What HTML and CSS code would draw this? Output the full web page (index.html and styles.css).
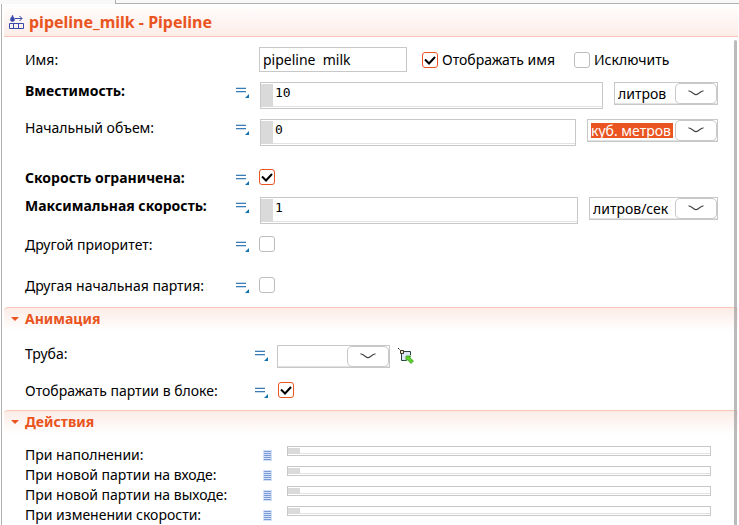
FILE: index.html
```html
<!DOCTYPE html>
<html lang="ru">
<head>
<meta charset="utf-8">
<title>pipeline_milk - Pipeline</title>
<link rel="stylesheet" href="styles.css">
</head>
<body>
<svg class="defs" aria-hidden="true">
  <symbol id="param" viewBox="0 0 13 12">
    <path d="M0 0H10V1H0ZM0 5H10V6H0Z" fill="#c9dcec"/>
    <path d="M0 1H10V2H0ZM0 4H10V5H0Z" fill="#3a7ab5"/>
    <path d="M13 7V11H9Z" fill="#1373b0"/>
  </symbol>
  <symbol id="lines" viewBox="0 0 9 11">
    <path d="M0 0H9V11H0Z" fill="#d3e0f8"/>
    <path d="M1 1H8M1 3H8M1 5H8M1 7H8M1 9H8" transform="translate(0 .5)" stroke="#7c9cd6"/>
  </symbol>
  <symbol id="arrow" viewBox="0 0 16 6">
    <path d="M.5 .7Q3 1.300 5.500 3.500Q8 5.800 10.500 3.500Q13 1.300 15.500 .7" fill="none" stroke="#444" stroke-width="1.1"/>
  </symbol>
</svg>
<div class="tabs"><span class="tab"></span><span class="tab-rest"></span></div>
<main class="panel">
  <header class="title">
    <svg class="title-icon" viewBox="0 0 15 14">
      <path d="M3.500 0Q4 2 5.300 3.300Q6.500 6.200 3.500 6.500Q.5 6.200 1.700 3.300Q3 2 3.500 0Z" fill="#3949ab" stroke="#3949ab" stroke-width=".5"/>
      <path d="M6 3.500H13M10.500 1L13 3.500L10.500 6" fill="none" stroke="#3949ab"/>
      <path d="M.5 8.500H14.500V13.500H.5ZM4.500 8.500V13.500M9.500 8.500V13.500" fill="none" stroke="#3949ab"/>
    </svg>
    <h1>pipeline_milk - Pipeline</h1>
  </header>
  <form class="body">
    <div class="group">
      <div class="row name-row">
        <label class="label" for="name">Имя:</label>
        <input class="name" id="name" type="text" value="pipeline  milk">
        <label class="option"><input class="check" type="checkbox" checked>Отображать имя</label>
        <label class="option"><input class="check" type="checkbox">Исключить</label>
      </div>
      <div class="row">
        <label class="label strong" for="capacity">Вместимость:</label>
        <svg class="param"><use href="#param"/></svg>
        <input class="code" id="capacity" type="text" value="10">
        <div class="combo short"><select aria-label="Единицы вместимости"><option>литров</option></select><span class="drop"><svg><use href="#arrow"/></svg></span></div>
      </div>
      <div class="row">
        <label class="label" for="initial">Начальный объем:</label>
        <svg class="param"><use href="#param"/></svg>
        <input class="code" id="initial" type="text" value="0">
        <div class="combo selected"><select aria-label="Единицы объема"><option>куб. метров</option></select><span class="drop"><svg><use href="#arrow"/></svg></span></div>
      </div>
      <div class="row spaced">
        <label class="label strong" for="limited">Скорость ограничена:</label>
        <svg class="param"><use href="#param"/></svg>
        <input class="check" id="limited" type="checkbox" checked>
      </div>
      <div class="row">
        <label class="label strong" for="speed">Максимальная скорость:</label>
        <svg class="param"><use href="#param"/></svg>
        <input class="code" id="speed" type="text" value="1">
        <div class="combo"><select aria-label="Единицы скорости"><option>литров/сек</option></select><span class="drop"><svg><use href="#arrow"/></svg></span></div>
      </div>
      <div class="row nudged">
        <label class="label" for="priority">Другой приоритет:</label>
        <svg class="param"><use href="#param"/></svg>
        <input class="check" id="priority" type="checkbox">
      </div>
      <div class="row spaced">
        <label class="label" for="batch">Другая начальная партия:</label>
        <svg class="param"><use href="#param"/></svg>
        <input class="check" id="batch" type="checkbox">
      </div>
    </div>

    <h2 class="section"><button type="button">Анимация</button></h2>
    <div class="group animation">
      <div class="row">
        <label class="label" for="pipe">Труба:</label>
        <svg class="param"><use href="#param"/></svg>
        <div class="combo pipe"><select id="pipe"><option></option></select><span class="drop"><svg><use href="#arrow"/></svg></span></div>
        <button class="pick" type="button" aria-label="Выбрать трубу">
          <svg viewBox="0 0 16 16">
            <path d="M4 4H13V13H4Z" fill="#dfe7f5"/>
            <path d="M0 0L3 3" stroke="#222" stroke-dasharray="1.500 .6"/>
            <path d="M5 3.500H12.500V7M3.500 5V12.500H8" fill="none" stroke="#2d3f47"/>
            <path d="M2.500 2.500H5.500V5.500H2.500Z" fill="#fbe2b0" stroke="#333"/>
            <path d="M8 8H13L11.700 9.500L15.500 13L13 15.500L9.700 11.700L8 13Z" fill="#5ed02a" stroke="#36931b" stroke-width=".7"/>
          </svg>
        </button>
      </div>
      <div class="row">
        <label class="label" for="show">Отображать партии в блоке:</label>
        <svg class="param"><use href="#param"/></svg>
        <input class="check" id="show" type="checkbox" checked>
      </div>
    </div>

    <h2 class="section"><button type="button">Действия</button></h2>
    <div class="group actions">
      <div class="row"><label class="label" for="a1">При наполнении:</label><svg class="lines"><use href="#lines"/></svg><input class="code" id="a1" type="text"></div>
      <div class="row"><label class="label" for="a2">При новой партии на входе:</label><svg class="lines"><use href="#lines"/></svg><input class="code" id="a2" type="text"></div>
      <div class="row"><label class="label" for="a3">При новой партии на выходе:</label><svg class="lines"><use href="#lines"/></svg><input class="code" id="a3" type="text"></div>
      <div class="row"><label class="label" for="a4">При изменении скорости:</label><svg class="lines"><use href="#lines"/></svg><input class="code" id="a4" type="text"></div>
    </div>
    <span class="scrollbar"></span>
  </form>
</main>
</body>
</html>
```

FILE: styles.css
```css
* { box-sizing: border-box; }

body {
  display: flex;
  flex-direction: column;
  height: 100vh;
  margin: 0;
  overflow: hidden;
  background: #fff;
  color: #000;
  font: 14px/18px "Noto Sans", sans-serif;
}

.defs { position: absolute; width: 0; height: 0; }

.tabs { display: flex; flex: none; height: 4px; background: #f8f8f8; }
.tab { width: 116px; border-right: 1px solid #b0b0b0; }
.tab-rest { flex: 1; border-bottom: 1px solid #b0b0b0; }

.panel {
  display: flex;
  flex: 1;
  flex-direction: column;
  min-height: 0;
  margin-left: 1px;
  border-left: 1px solid #b0b0b0;
}

.title {
  display: flex;
  flex: none;
  align-items: center;
  gap: 5px;
  height: 33px;
  margin: 0 1px 0 2px;
  padding: 3px 5px 0;
  border-bottom: 1px solid #f7c6b4;
  background: linear-gradient(#fff, #fcece7);
}
.title-icon { width: 15px; height: 14px; }

h1 { margin: 0; color: #e95420; font-size: 16px; line-height: 20px; }

.body { position: relative; flex: 1; min-height: 0; overflow: hidden; }

.group {
  display: flex;
  flex-direction: column;
  gap: 10px;
  padding: 10px 21px 12px 23px;
}

.row { display: flex; align-items: flex-start; }
.label { flex: none; width: 211px; white-space: nowrap; }
.strong { font-weight: 700; }
.spaced { margin-top: 13px; }
.nudged { margin-top: 2px; }

.name-row { align-items: center; }
.name-row .label { width: 234px; }
.name {
  width: 148px;
  height: 25px;
  margin-right: 15px;
  padding: 0 3px;
  border: 1px solid #c8c8c8;
  font: inherit;
}
.option { display: flex; align-items: center; gap: 4px; margin-right: 19px; white-space: nowrap; }

.param { flex: none; width: 13px; height: 12px; margin: 5px 11px 0 0; }
.param + .check { margin-left: -1px; }

.check {
  flex: none;
  width: 16px;
  height: 16px;
  margin: 0;
  appearance: none;
  border: 1px solid #bdbdbd;
  border-radius: 3px;
  background: #fff;
}
.check:checked {
  border-color: #e95420;
  background: url("data:image/svg+xml,%3Csvg xmlns='http://www.w3.org/2000/svg' viewBox='0 0 14 14'%3E%3Cpath d='M2 6.500L6 10.500L12 4' fill='none' stroke='%23000' stroke-width='2'/%3E%3C/svg%3E");
}

.code {
  flex: 1;
  min-width: 0;
  height: 27px;
  padding: 0 0 7px 14px;
  border: 1px solid #c8c8c8;
  background:
    linear-gradient(#dadada, #dadada) 0 1px / 12px calc(100% - 2px) no-repeat,
    linear-gradient(#e2e2e2, #e2e2e2) 0 calc(100% - 1px) / 100% 1px no-repeat,
    #fff;
  font: 13px "DejaVu Sans Mono", monospace;
}

.combo {
  position: relative;
  flex: none;
  width: 129px;
  height: 23px;
  margin-left: 11px;
  border: 1px solid #c8c8c8;
  box-shadow: inset 0 -1px #e2e2e2;
}
.combo.short { width: 104px; }
.combo.selected { width: 131px; }
.combo select {
  width: 100%;
  height: 21px;
  padding: 0 44px 0 3px;
  appearance: none;
  border: 0;
  background: none;
  color: #000;
  font: inherit;
}
.combo.selected select {
  background: linear-gradient(#e95420, #e95420) 3px 3px / calc(100% - 47px) 15px no-repeat;
  color: #fff;
}
.drop {
  position: absolute;
  top: 0;
  right: 0;
  display: flex;
  justify-content: center;
  width: 42px;
  height: 21px;
  padding-top: 6px;
  border: 1px solid #c8c8c8;
  border-radius: 5px;
  background: #fff;
  pointer-events: none;
}
.drop svg { width: 16px; height: 6px; }

.section {
  height: 24px;
  margin: 0 1px 0 2px;
  border: 1px solid #f7c6b4;
  border-width: 1px 0 0;
  border-radius: 4px 4px 0 0;
  background: linear-gradient(#fcece7, #fff);
}
.section button {
  display: flex;
  align-items: center;
  gap: 6px;
  padding: 2px 7px;
  border: 0;
  background: none;
  color: #e95420;
  font: 700 14px/18px "Noto Sans", sans-serif;
}
.section button::before {
  border: 4px solid transparent;
  border-top-color: #e95420;
  border-bottom: 0;
  content: "";
}

.animation { gap: 14px; padding: 14px 21px 10px 23px; }
.animation .label { width: 230px; }
.animation .param { margin-right: 9px; }
.animation .param + .check { margin-left: 1px; }
.combo.pipe { width: 113px; margin-left: 0; }
.pick { width: 16px; height: 16px; margin: 3px 0 0 8px; padding: 0; border: 0; background: none; }
.pick svg { display: block; width: 16px; height: 16px; }

.actions { gap: 2px; padding: 12px 28px 0 23px; }
.actions .label { width: 238px; }
.actions .code { height: 10px; padding: 0; }
.lines { flex: none; width: 9px; height: 11px; margin: 4px 15px 0 0; }

.scrollbar {
  position: absolute;
  top: 3px;
  right: 2px;
  bottom: 0;
  width: 3px;
  border-radius: 2px 2px 0 0;
  background: rgb(150 150 150 / 65%);
}
```
